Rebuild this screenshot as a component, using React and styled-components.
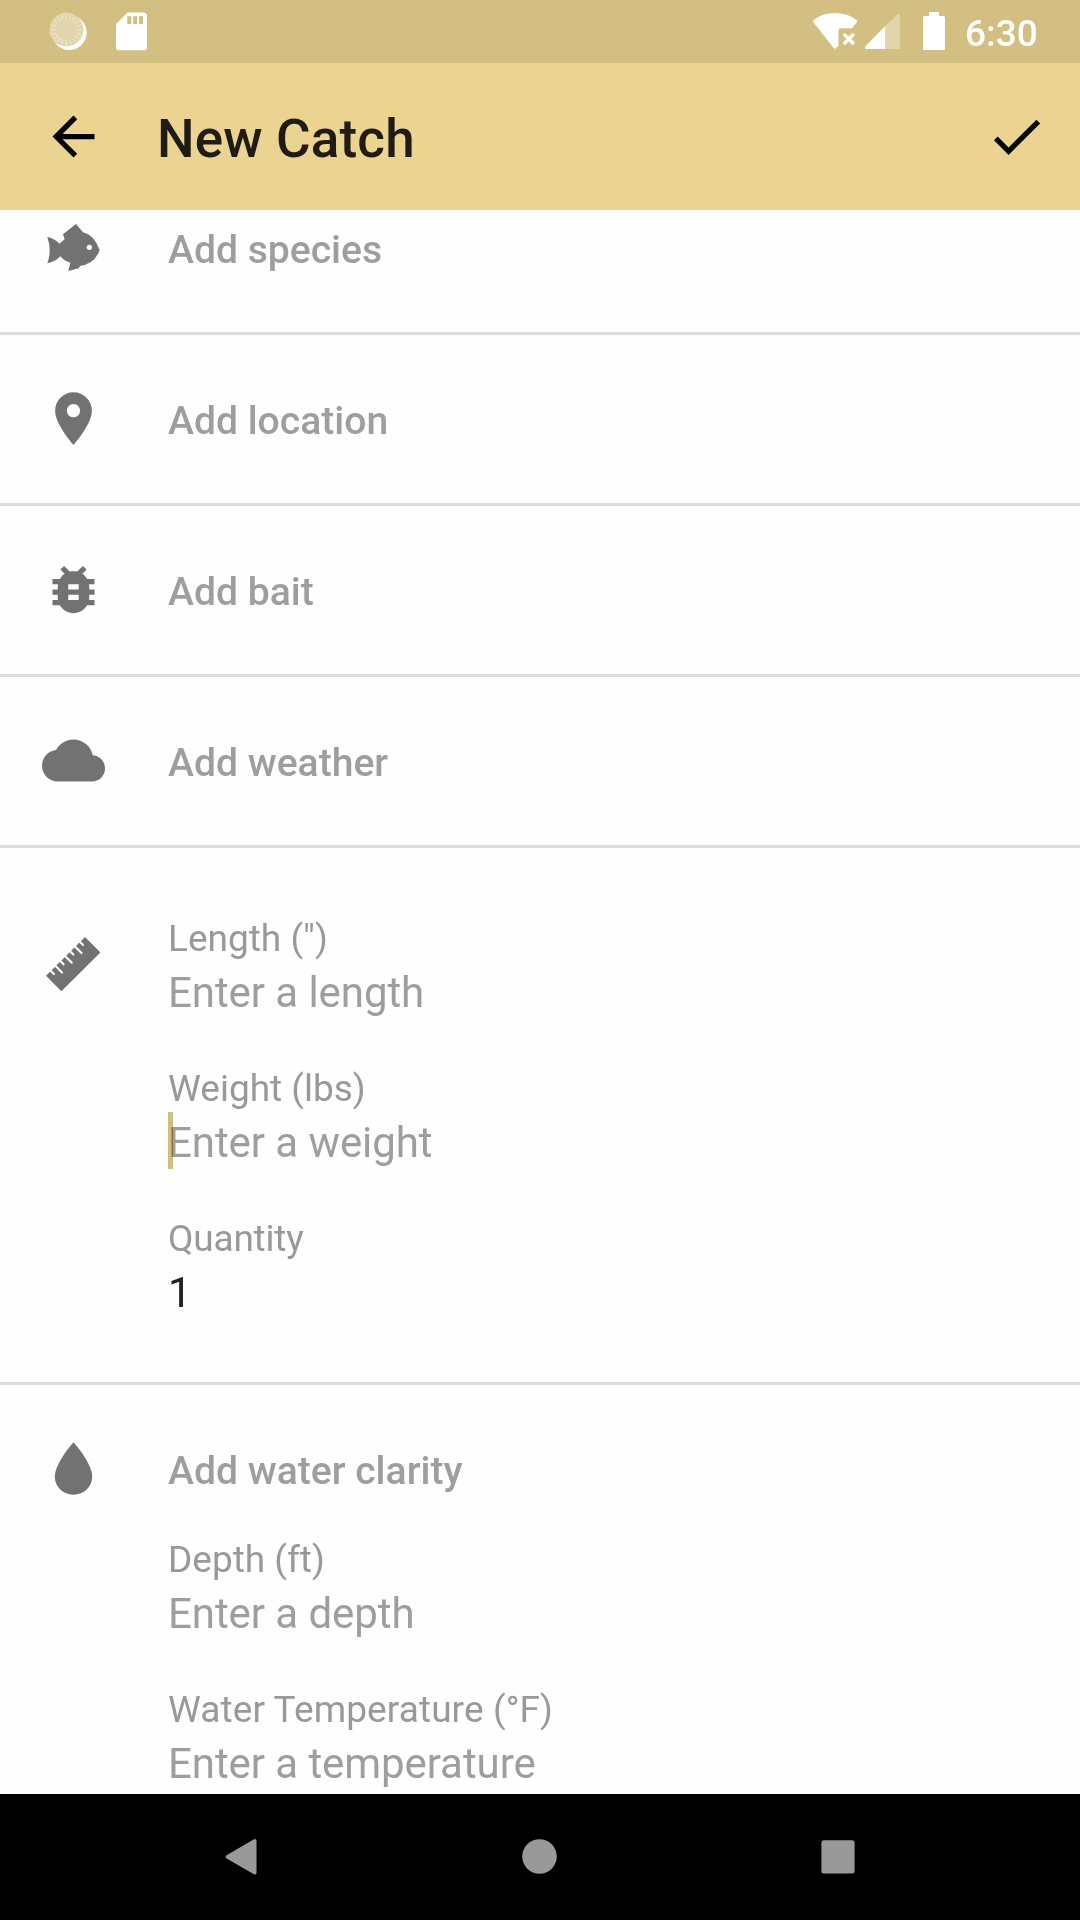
import React from "react";
import styled, { createGlobalStyle } from "styled-components";

const Global = createGlobalStyle`
  *, *::before, *::after { box-sizing: border-box; }
  body { margin: 0; background: #fefefe; font-family: Roboto, "Noto Sans", sans-serif; }
`;

const Screen = styled.div`
  width: 1080px;
  height: 1920px;
  display: flex;
  flex-direction: column;
  overflow: hidden;
  background: #fefefe;
`;

const StatusBar = styled.header`
  flex: none;
  height: 63px;
  padding: 0 42px 0 49px;
  display: flex;
  align-items: center;
  justify-content: space-between;
  background: #d4bf83;
`;

const StatusGroup = styled.div`
  display: flex;
  align-items: center;
`;

const StatusIcon = styled.svg`
  display: block;
  width: ${(p) => p.$w}px;
  height: 63px;
  margin-right: ${(p) => p.$gap || 0}px;
`;

const Clock = styled.span`
  width: 73px;
  font-size: 37px;
  white-space: nowrap;
  font-weight: 500;
  line-height: 44px;
  padding-top: 4px;
  color: #fff;
`;

const AppBar = styled.div`
  flex: none;
  height: 147px;
  padding: 0 32px 0 42px;
  display: flex;
  align-items: center;
  background: #ebd392;
`;

const Title = styled.h1`
  flex: 1;
  margin: 0;
  padding: 5px 0 0 52px;
  font-size: 53px;
  font-weight: 500;
  letter-spacing: 0.15px;
  line-height: 60px;
  color: #201c13;
`;

const BarButton = styled.button`
  border: 0;
  padding: 0;
  background: none;
  color: #000;
  display: flex;
`;

const Glyph = styled.svg`
  display: block;
  flex: none;
  width: 63px;
  height: 63px;
  fill: currentColor;
`;

const Form = styled.main`
  flex: 1;
  min-height: 0;
  overflow: hidden;
`;

const Scrolled = styled.div`
  margin-top: -46px;
`;

const Section = styled.section`
  display: flex;
  min-height: 171px;
  padding: 0 42px ${(p) => p.$bottom || 0}px;
  gap: 63px;
  border-bottom: 3px solid #dcdcdc;
`;

const IconSlot = styled.div`
  flex: none;
  padding-top: ${(p) => p.$top || 52}px;
  color: #727272;
`;

const Body = styled.div`
  flex: 1;
  padding-top: ${(p) => p.$top || 63}px;
`;

const Prompt = styled.div`
  font-size: 39.1px;
  font-weight: 500;
  line-height: 46px;
  color: #9e9e9e;
`;

const Fields = styled.div`
  display: flex;
  flex-direction: column;
  gap: 46px;
  margin-top: ${(p) => p.$top || 0}px;
`;

const Field = styled.div`
  display: flex;
  flex-direction: column;
  gap: 4px;
`;

const Label = styled.div`
  font-size: 37px;
  letter-spacing: ${(p) => p.$tracking || 0}px;
  line-height: 43px;
  color: #999;
`;

const Value = styled.div`
  position: relative;
  font-size: 42px;
  letter-spacing: -0.07px;
  line-height: 57px;
  color: ${(p) => (p.$filled ? "#212121" : "#9e9e9e")};
`;

const Caret = styled.span`
  position: absolute;
  left: 0;
  top: -2px;
  width: 5px;
  height: 57px;
  background: #d4bf83;
  mix-blend-mode: multiply;
`;

const NavBar = styled.nav`
  flex: none;
  height: 126px;
  padding: 0 91.5px;
  display: flex;
  align-items: center;
  background: #000;
`;

const NavButton = styled.button`
  flex: 1;
  border: 0;
  padding: 0;
  background: none;
  display: flex;
  justify-content: center;
`;

const NavGlyph = styled.svg`
  display: block;
  width: 48px;
  height: 48px;
  fill: #999;
`;

const FishIcon = () => (
  <Glyph viewBox="6 -6 189 189">
    <path d="M22 57Q42 60 58 77L74 64L69 49L108 18L129 43Q162 50 179 96Q165 137 120 144L116 151L85 159L91 134Q72 129 61 115Q45 132 22 136Q36 97 22 57Z" />
    <circle cx="148" cy="88" r="8" fill="#fefefe" />
  </Glyph>
);

const PinIcon = () => (
  <Glyph viewBox="0 0 24 24">
    <path d="M12 2C8.13 2 5 5.13 5 9c0 5.25 7 13 7 13s7-7.75 7-13c0-3.87-3.13-7-7-7zm0 9.5c-1.38 0-2.5-1.12-2.5-2.5s1.12-2.5 2.5-2.5 2.5 1.12 2.5 2.5-1.12 2.5-2.5 2.5z" />
  </Glyph>
);

const BugIcon = () => (
  <Glyph viewBox="0 0 24 24">
    <path d="M20 8h-2.81c-.45-.78-1.07-1.45-1.82-1.96L17 4.41 15.59 3l-2.17 2.17C12.96 5.06 12.49 5 12 5c-.49 0-.96.06-1.41.17L8.41 3 7 4.41l1.62 1.63C7.88 6.55 7.26 7.22 6.81 8H4v2h2.09c-.05.33-.09.66-.09 1v1H4v2h2v1c0 .34.04.67.09 1H4v2h2.81c1.04 1.79 2.97 3 5.19 3s4.15-1.21 5.19-3H20v-2h-2.09c.05-.33.09-.66.09-1v-1h2v-2h-2v-1c0-.34-.04-.67-.09-1H20V8zm-6 8h-4v-2h4v2zm0-4h-4v-2h4v2z" />
  </Glyph>
);

const CloudIcon = () => (
  <Glyph viewBox="0 0 24 24">
    <path d="M19.35 10.04C18.67 6.59 15.64 4 12 4 9.11 4 6.6 5.64 5.35 8.04 2.34 8.36 0 10.91 0 14c0 3.31 2.69 6 6 6h13c2.76 0 5-2.24 5-5 0-2.64-2.05-4.78-4.65-4.96z" />
  </Glyph>
);

const NOTCHES = [1, 2, 3, 4, 5, 6, 7];

const RulerIcon = () => (
  <Glyph viewBox="2 2 63 63">
    <path d="M6 45.8L45 7L60.4 22.4L21.4 61.2Z" />
    {NOTCHES.map((k) => {
      const x = 5 + 4.87 * k;
      const y = 44.8 - 4.84 * k;
      const d = k % 2 ? 4 : 7.3;
      return (
        <path
          key={k}
          d={`M${x} ${y}L${x + d} ${y + d}`}
          stroke="#fefefe"
          strokeWidth="2.1"
          strokeLinecap="round"
        />
      );
    })}
  </Glyph>
);

const DropIcon = () => (
  <Glyph viewBox="0 0 63 63">
    <path d="M31.5 5.2C31.5 5.2 12.8 26 12.8 39.6C12.8 50 21 57.8 31.5 57.8S50.2 50 50.2 39.6C50.2 26 31.5 5.2 31.5 5.2Z" />
  </Glyph>
);

const TICKS = Array.from({ length: 20 }, (_, i) => i * 18);

function FormField({ label, tracking, value, filled, focused }) {
  return (
    <Field>
      <Label $tracking={tracking}>{label}</Label>
      <Value $filled={filled}>
        {value}
        {focused && <Caret />}
      </Value>
    </Field>
  );
}

function PromptRow({ icon, text }) {
  return (
    <Section>
      <IconSlot>{icon}</IconSlot>
      <Body>
        <Prompt>{text}</Prompt>
      </Body>
    </Section>
  );
}

export default function App() {
  return (
    <>
      <Global />
      <Screen>
        <StatusBar>
          <StatusGroup>
            <StatusIcon $w={39} $gap={28} viewBox="49 0 39 63">
              <circle cx="69.3" cy="32.6" r="17.4" fill="#fff" />
              <circle cx="66.4" cy="29.5" r="16.9" fill="#e2d5ae" />
              {TICKS.map((a) => (
                <path
                  key={a}
                  d="M66.4 14V19"
                  stroke="#ece3c8"
                  strokeWidth="1.2"
                  transform={`rotate(${a} 66.4 29.6)`}
                />
              ))}
            </StatusIcon>
            <StatusIcon $w={31} viewBox="116 0 31 63">
              <path
                fill="#fff"
                fillRule="evenodd"
                d="M127.5 12.5H143.5Q147 12.5 147 16V47Q147 50.3 143.5 50.3H119.5Q116 50.3 116 47V24ZM127.3 16.3V24H131.3V16.3ZM133.2 16.3V24H137.2V16.3ZM139 16.3V24H143V16.3Z"
              />
            </StatusIcon>
          </StatusGroup>
          <StatusGroup>
            <StatusIcon $w={45} $gap={7} viewBox="813 0 45 63">
              <path
                fill="#fff"
                d="M813.6 22.6Q812.4 20.8 814.3 19.4Q823.5 13 835 13T855.8 19.4Q857.8 20.8 856.6 22.6L852 28.3H840.5Q838.5 28.3 838.5 30.3V45.5L836.3 48Q835 49.2 833.7 48Z"
              />
              <path
                d="M844.8 35L852.8 43M852.8 35L844.8 43"
                stroke="#fff"
                strokeWidth="3.4"
                strokeLinecap="round"
              />
            </StatusIcon>
            <StatusIcon $w={35} $gap={23} viewBox="865 0 35 63">
              <path
                fill="#e2d4ab"
                d="M885 26.2L897.5 14.4Q900 12.8 900 16V47.5Q900 49 898.5 49H885Z"
              />
              <path fill="#fff" d="M885 26.2V49H866.5Q864 49 865.5 46.3Z" />
            </StatusIcon>
            <StatusIcon $w={22} $gap={20} viewBox="923 0 22 63">
              <path
                fill="#fff"
                d="M929 12H939V16H943.5Q945 16 945 17.5V48.5Q945 50 943.5 50H924.5Q923 50 923 48.5V17.5Q923 16 924.5 16H929Z"
              />
            </StatusIcon>
            <Clock>6:30</Clock>
          </StatusGroup>
        </StatusBar>

        <AppBar>
          <BarButton aria-label="Back">
            <Glyph viewBox="0 0 24 24">
              <path d="M20 11H7.83l5.59-5.59L12 4l-8 8 8 8 1.41-1.41L7.83 13H20v-2z" />
            </Glyph>
          </BarButton>
          <Title>New Catch</Title>
          <BarButton aria-label="Save">
            <Glyph viewBox="0 0 24 24">
              <path d="M9 16.17L4.83 12l-1.42 1.41L9 19 21 7l-1.41-1.41z" />
            </Glyph>
          </BarButton>
        </AppBar>

        <Form>
          <Scrolled>
            <PromptRow icon={<FishIcon />} text="Add species" />
            <PromptRow icon={<PinIcon />} text="Add location" />
            <PromptRow icon={<BugIcon />} text="Add bait" />
            <PromptRow icon={<CloudIcon />} text="Add weather" />
            <Section $bottom={61}>
              <IconSlot $top={84}>
                <RulerIcon />
              </IconSlot>
              <Body $top={69}>
                <Fields>
                  <FormField label={'Length (")'} value="Enter a length" />
                  <FormField label="Weight (lbs)" value="Enter a weight" focused />
                  <FormField label="Quantity" tracking={-0.2} value="1" filled />
                </Fields>
              </Body>
            </Section>
            <Section $bottom={61}>
              <IconSlot>
                <DropIcon />
              </IconSlot>
              <Body>
                <Prompt>Add water clarity</Prompt>
                <Fields $top={44}>
                  <FormField label="Depth (ft)" value="Enter a depth" />
                  <FormField
                    label="Water Temperature (°F)"
                    tracking={0.09}
                    value="Enter a temperature"
                  />
                </Fields>
              </Body>
            </Section>
          </Scrolled>
        </Form>

        <NavBar>
          <NavButton aria-label="Back">
            <NavGlyph viewBox="0 0 48 48">
              <path d="M9.6 22.2L36.5 6.4Q39.5 5 39.5 8V39.5Q39.5 42.5 36.5 41L9.6 25.6Q7.6 23.9 9.6 22.2Z" />
            </NavGlyph>
          </NavButton>
          <NavButton aria-label="Home">
            <NavGlyph viewBox="0 0 48 48">
              <circle cx="23.5" cy="23.5" r="17.3" />
            </NavGlyph>
          </NavButton>
          <NavButton aria-label="Recents">
            <NavGlyph viewBox="0 0 48 48">
              <rect x="6.4" y="7.2" width="33.2" height="33.2" rx="2.5" />
            </NavGlyph>
          </NavButton>
        </NavBar>
      </Screen>
    </>
  );
}
